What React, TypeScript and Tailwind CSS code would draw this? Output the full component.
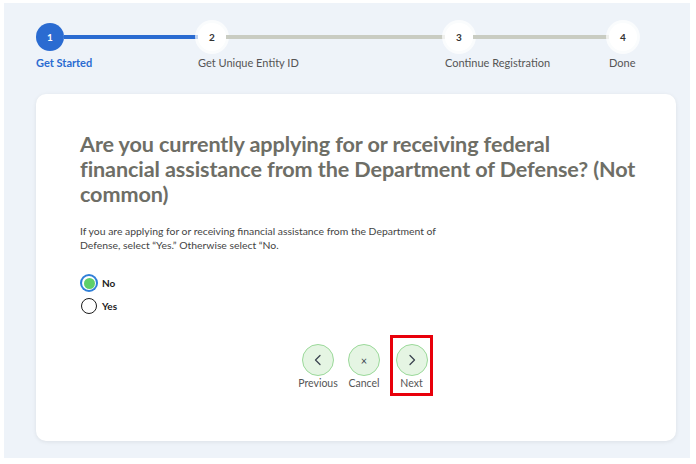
import React from 'react';

const STEPS = [
  { n: 1, label: 'Get Started', active: true },
  { n: 2, label: 'Get Unique Entity ID', active: false },
  { n: 3, label: 'Continue Registration', active: false },
  { n: 4, label: 'Done', active: false },
];

// connector widths between circles, px
const LINES = [
  { w: 'w-[134px]', done: true },
  { w: 'w-[219px]', done: false },
  { w: 'w-[136px]', done: false },
];

function Step({ n, label, active }: { n: number; label: string; active: boolean }) {
  return (
    <div className="flex w-[28px] flex-col items-start">
      <div
        className={
          active
            ? 'flex h-[28px] w-[28px] items-center justify-center rounded-full bg-[#2a6bd1] text-[10px] font-bold text-white'
            : 'flex h-[28px] w-[28px] items-center justify-center rounded-full bg-white text-[10px] font-bold text-[#333] ring-[3px] ring-white/70'
        }
      >
        {n}
      </div>
      <div
        className={
          active
            ? 'mt-[5px] whitespace-nowrap text-[11px] font-bold leading-[14px] text-[#2a6bd1]'
            : 'mt-[5px] whitespace-nowrap text-[11px] leading-[14px] text-[#555]'
        }
      >
        {label}
      </div>
    </div>
  );
}

function Chevron({ dir }: { dir: 'left' | 'right' }) {
  return (
    <svg width="14" height="14" viewBox="0 0 14 14" fill="none">
      <path
        d={dir === 'left' ? 'M9 2.5 L4.5 7 L9 11.5' : 'M5 2.5 L9.5 7 L5 11.5'}
        stroke="#3d4551"
        strokeWidth="1.3"
        strokeLinecap="round"
        strokeLinejoin="round"
      />
    </svg>
  );
}

function NavButton({ label, icon }: { label: string; icon: React.ReactNode }) {
  return (
    <div className="flex w-[32px] flex-col items-center">
      <div className="flex h-[32px] w-[32px] items-center justify-center rounded-full border border-[#9bd99a] bg-[#e5f5e3]">
        {icon}
      </div>
      <div className="mt-[1px] whitespace-nowrap text-[10.5px] leading-[13px] text-[#555]">{label}</div>
    </div>
  );
}

export default function App() {
  return (
    <div
      className="h-[464px] w-[696px] bg-white pb-[6px] pl-[4px] pr-[6px] pt-[3px]"
      style={{ fontFamily: 'Lato, "Noto Sans", sans-serif' }}
    >
      <div className="h-full w-full bg-[#eef3f9] pl-[32px] pr-[14px] pt-[20px]">
        {/* stepper */}
        <div className="flex items-start">
          {STEPS.map((s, i) => (
            <React.Fragment key={s.n}>
              <Step {...s} />
              {i < LINES.length && (
                <div
                  className={
                    LINES[i].done
                      ? `mt-[12px] h-[4px] ${LINES[i].w} bg-[#2a6bd1]`
                      : `mt-[12px] h-[4px] ${LINES[i].w} bg-[#c9ccc2]`
                  }
                />
              )}
            </React.Fragment>
          ))}
        </div>

        {/* card */}
        <div className="mt-[24px] h-[347px] w-[640px] rounded-[10px] bg-white pl-[44px] pr-[20px] pt-[38px] shadow-[0_1px_4px_rgba(0,0,0,0.08)]">
          <h1 className="w-[576px] text-[21.6px] font-bold leading-[25px] tracking-[-0.1px] text-[#6e6e66]">
            Are you currently applying for or receiving federal
            <br />
            financial assistance from the Department of Defense? (Not common)
          </h1>
          <p className="mt-[17px] w-[380px] text-[10.4px] leading-[14px] text-[#444]">
            If you are applying for or receiving financial assistance from the Department of Defense, select
            “Yes.” Otherwise select “No.
          </p>

          <div className="mt-[22px] flex flex-col gap-[6px]">
            <label className="flex items-center gap-[4px]">
              <span className="flex h-[18px] w-[18px] items-center justify-center rounded-full bg-[#2f7fd8]">
                <span className="flex h-[14px] w-[14px] items-center justify-center rounded-full bg-white">
                  <span className="h-[11px] w-[11px] rounded-full bg-[#5fcf69]" />
                </span>
              </span>
              <span className="text-[10px] font-bold text-[#1b1b1b]">No</span>
            </label>
            <label className="flex items-center gap-[4px]">
              <span className="ml-[1px] mr-[1px] h-[16px] w-[16px] rounded-full border-[1.5px] border-[#1b1b1b] bg-white" />
              <span className="text-[10px] font-bold text-[#1b1b1b]">Yes</span>
            </label>
          </div>

          <div className="ml-[222px] mt-[30px] flex items-start">
            <NavButton label="Previous" icon={<Chevron dir="left" />} />
            <div className="ml-[14px]">
              <NavButton
                label="Cancel"
                icon={<span className="text-[11px] leading-none text-[#3d4551]">×</span>}
              />
            </div>
            <div className="-mt-[9px] ml-[10px] flex w-[43px] justify-center border-[3px] border-[#e8000b] pb-[3px] pt-[6px]">
              <NavButton label="Next" icon={<Chevron dir="right" />} />
            </div>
          </div>
        </div>
      </div>
    </div>
  );
}
